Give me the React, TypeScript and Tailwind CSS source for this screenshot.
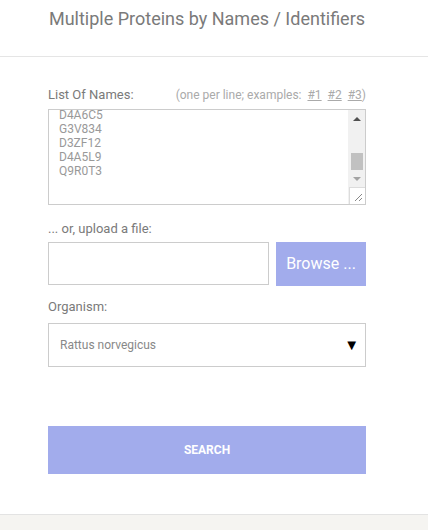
import React from "react";

const names = ["D4A6C5", "G3V834", "D3ZF12", "D4A5L9", "Q9R0T3"];

function FakeScrollbar() {
  return (
    <div className="w-[17px] flex flex-col bg-[#f1f1f1] border-l border-[#f1f1f1]">
      <div className="h-[17px] flex items-center justify-center">
        <div className="w-0 h-0 border-l-[4px] border-r-[4px] border-b-[4px] border-l-transparent border-r-transparent border-b-[#505050]" />
      </div>
      <div className="flex-1 relative">
        <div className="absolute left-[2px] right-[2px] top-[26px] h-[17px] bg-[#c1c1c1]" />
      </div>
      <div className="h-[17px] flex items-center justify-center">
        <div className="w-0 h-0 border-l-[4px] border-r-[4px] border-t-[4px] border-l-transparent border-r-transparent border-t-[#a3a3a3]" />
      </div>
      <div className="h-[17px] bg-white border-t border-l border-[#dcdcdc] flex items-end justify-end">
        <svg width="9" height="9" viewBox="0 0 9 9" className="mb-[2px] mr-[2px]">
          <line x1="1" y1="8" x2="8" y2="1" stroke="#888" strokeWidth="1" />
          <line x1="5" y1="8" x2="8" y2="5" stroke="#888" strokeWidth="1" />
        </svg>
      </div>
    </div>
  );
}

export default function App() {
  return (
    <div className="w-[428px] h-[530px] bg-white flex flex-col font-['Roboto',sans-serif] text-[#777]">
      <div className="h-[57px] border-b border-[#e5e5e5]">
        <div className="w-[414px] flex justify-center pt-[7px]">
          <h1 className="text-[18px] leading-[24px] text-[#7a7a7a]">Multiple Proteins by Names / Identifiers</h1>
        </div>
      </div>

      <div className="flex-1 px-[48px] pt-[29px] w-[414px]">
        <div className="flex items-baseline justify-between text-[13px] leading-[18px]">
          <span className="text-[#7a7a7a]">List Of Names:</span>
          <span className="text-[12px] text-[#aaa]">
            (one per line; examples:&nbsp; <span className="underline">#1</span>&nbsp; <span className="underline">#2</span>&nbsp; <span className="underline">#3</span>)
          </span>
        </div>
        <div className="mt-[5px] h-[96px] border border-[#ccc] flex overflow-hidden">
          <div className="flex-1 overflow-hidden pl-[10px]">
            <div className="mt-[-2px] text-[12px] leading-[14px] text-[#999]">
              {names.map((n) => (
                <div key={n}>{n}</div>
              ))}
            </div>
          </div>
          <FakeScrollbar />
        </div>

        <div className="mt-[15px] text-[13px] leading-[18px] text-[#7a7a7a]">... or, upload a file:</div>
        <div className="mt-[4px] flex gap-[7px]">
          <div className="w-[221px] h-[43px] border border-[#ccc] bg-white" />
          <button className="flex-1 h-[44px] bg-[#a2acec] text-white text-[16px]">Browse ...</button>
        </div>

        <div className="mt-[12px] text-[13px] leading-[18px] text-[#7a7a7a]">Organism:</div>
        <div className="mt-[7px] h-[44px] border border-[#ccc] flex items-center justify-between pl-[11px] pr-[6px]">
          <span className="text-[12px] text-[#888]">Rattus norvegicus</span>
          <span className="text-[15px] text-black leading-none">▼</span>
        </div>

        <button className="mt-[59px] w-full h-[48px] bg-[#a2acec] text-white text-[12px] font-bold">SEARCH</button>
      </div>

      <div className="h-[16px] bg-[#f5f4f1] border-t border-[#e3e3e3]" />
    </div>
  );
}
